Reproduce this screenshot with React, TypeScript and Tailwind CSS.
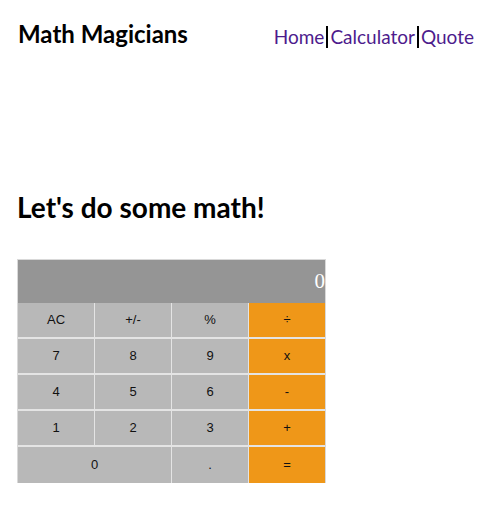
import React, { useState } from 'react';

const keys = [
  { label: 'AC' },
  { label: '+/-' },
  { label: '%' },
  { label: '÷', op: true },
  { label: '7' },
  { label: '8' },
  { label: '9' },
  { label: 'x', op: true },
  { label: '4' },
  { label: '5' },
  { label: '6' },
  { label: '-', op: true },
  { label: '1' },
  { label: '2' },
  { label: '3' },
  { label: '+', op: true },
  { label: '0', wide: true },
  { label: '.' },
  { label: '=', op: true },
];

function Calculator() {
  const [display] = useState('0');

  return (
    <div className="w-[309px] border-t border-l border-r border-[#d9d9d9] bg-[#e4e4e4]">
      <div className="h-[43px] bg-[#959595] flex items-center justify-end text-white text-[21px] font-['Liberation_Serif',serif]">
        {display}
      </div>
      <div className="grid grid-cols-4 grid-rows-[34px_34px_34px_34px_36px] gap-x-px gap-y-[2px]">
        {keys.map((k) => (
          <button
            key={k.label}
            type="button"
            className={`flex items-center justify-center text-[13px] text-[#111] font-['Liberation_Sans',sans-serif] ${
              k.op ? 'bg-[#ef9718]' : 'bg-[#b8b8b8]'
            } ${k.wide ? 'col-span-2' : ''}`}
          >
            {k.label}
          </button>
        ))}
      </div>
    </div>
  );
}

export default function App() {
  return (
    <div className="min-h-[528px] bg-white font-['Comic_Sans_MS','Lato',sans-serif]">
      <header className="flex justify-between items-start pl-[18px] pr-[16px] pt-[16px]">
        <h1 className="text-[24px] font-bold text-black">Math Magicians</h1>
        <nav className="flex items-center text-[19px] text-[#4d1b8c] mt-[7px]">
          <a href="#" className="pr-[2px]">Home</a>
          <a href="#" className="border-l-2 border-black px-[2px] leading-[22px]">Calculator</a>
          <a href="#" className="border-l-2 border-black pl-[2px] leading-[22px]">Quote</a>
        </nav>
      </header>
      <main className="pl-[17px]">
        <h2 className="mt-[134px] text-[28px] font-bold text-black">Let's do some math!</h2>
        <div className="mt-[31px]">
          <Calculator />
        </div>
      </main>
    </div>
  );
}
